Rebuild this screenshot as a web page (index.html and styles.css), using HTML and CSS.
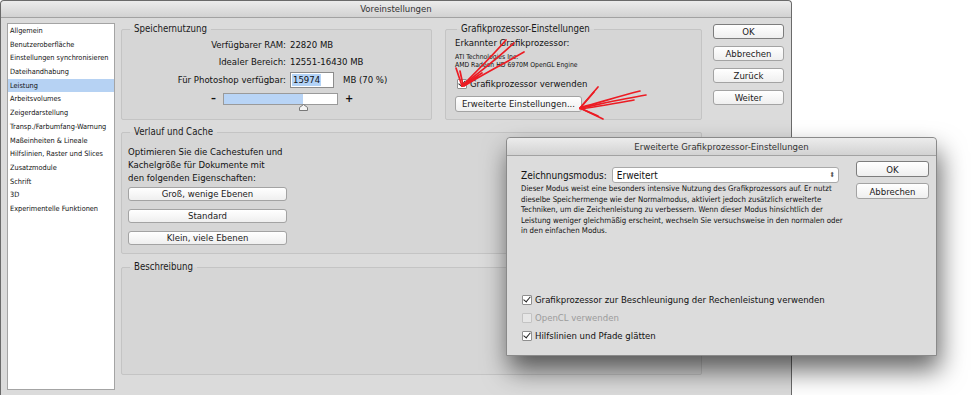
FILE: index.html
```html
<!DOCTYPE html>
<html lang="de">
<head>
    <meta charset="UTF-8">
    <title>Voreinstellungen</title>
    <link rel="stylesheet" href="styles.css">
</head>
<body>

<div class="window">
    <div class="titlebar">Voreinstellungen</div>
    <div class="window-body">
        <ul class="sidebar">
            <li>Allgemein</li>
            <li>Benutzeroberfläche</li>
            <li>Einstellungen synchronisieren</li>
            <li>Dateihandhabung</li>
            <li class="selected">Leistung</li>
            <li>Arbeitsvolumes</li>
            <li>Zeigerdarstellung</li>
            <li>Transp./Farbumfang-Warnung</li>
            <li>Maßeinheiten &amp; Lineale</li>
            <li>Hilfslinien, Raster und Slices</li>
            <li>Zusatzmodule</li>
            <li>Schrift</li>
            <li>3D</li>
            <li>Experimentelle Funktionen</li>
        </ul>

        <div class="panels">
            <div class="panel-row">
                <fieldset class="group memory">
                    <legend>Speichernutzung</legend>
                    <div class="mem-grid">
                        <span class="mem-label">Verfügbarer RAM:</span>
                        <span>22820 MB</span>
                        <span class="mem-label">Idealer Bereich:</span>
                        <span>12551-16430 MB</span>
                        <span class="mem-label">Für Photoshop verfügbar:</span>
                        <span class="mem-value">
                            <span class="field"><span class="field-sel">15974</span></span>
                            <span>MB (70 %)</span>
                        </span>
                    </div>
                    <div class="slider-row">
                        <span class="slider-sign">–</span>
                        <div class="slider">
                            <div class="slider-fill" style="width: 70%"></div>
                            <svg class="slider-thumb" style="left: 70%" width="9" height="7" viewBox="0 0 9 7">
                                <path d="M0.5 6.5 L0.5 3.5 L4.5 0.5 L8.5 3.5 L8.5 6.5 Z" fill="#f4f4f4" stroke="#777" stroke-width="1"/>
                            </svg>
                        </div>
                        <span class="slider-sign">+</span>
                    </div>
                </fieldset>

                <fieldset class="group gpu">
                    <legend>Grafikprozessor-Einstellungen</legend>
                    <div class="gpu-title">Erkannter Grafikprozessor:</div>
                    <div class="gpu-info">ATI Technologies Inc.<br>AMD Radeon HD 6970M OpenGL Engine</div>
                    <label class="check-row gpu-check">
                        <span class="check checked"></span>Grafikprozessor verwenden
                    </label>
                    <button class="btn gpu-btn">Erweiterte Einstellungen...</button>
                </fieldset>
            </div>

            <fieldset class="group cache">
                <legend>Verlauf und Cache</legend>
                <p class="cache-text">Optimieren Sie die Cachestufen und<br>Kachelgröße für Dokumente mit<br>den folgenden Eigenschaften:</p>
                <div class="cache-buttons">
                    <button class="btn">Groß, wenige Ebenen</button>
                    <button class="btn">Standard</button>
                    <button class="btn">Klein, viele Ebenen</button>
                </div>
            </fieldset>

            <fieldset class="group desc">
                <legend>Beschreibung</legend>
            </fieldset>
        </div>

        <div class="buttons">
            <button class="btn default">OK</button>
            <button class="btn">Abbrechen</button>
            <button class="btn">Zurück</button>
            <button class="btn">Weiter</button>
        </div>
    </div>
</div>

<div class="dialog">
    <div class="titlebar dialog-title">Erweiterte Grafikprozessor-Einstellungen</div>
    <div class="dialog-body">
        <div class="dialog-main">
            <div class="mode-row">
                <span class="mode-label">Zeichnungsmodus:</span>
                <div class="select">
                    <span>Erweitert</span>
                    <span class="select-arrows">⬍</span>
                </div>
            </div>
            <p class="mode-text">Dieser Modus weist eine besonders intensive Nutzung des Grafikprozessors auf. Er nutzt<br>dieselbe Speichermenge wie der Normalmodus, aktiviert jedoch zusätzlich erweiterte<br>Techniken, um die Zeichenleistung zu verbessern. Wenn dieser Modus hinsichtlich der<br>Leistung weniger gleichmäßig erscheint, wechseln Sie versuchsweise in den normalen oder<br>in den einfachen Modus.</p>
            <div class="dialog-checks">
                <label class="check-row"><span class="check checked"></span>Grafikprozessor zur Beschleunigung der Rechenleistung verwenden</label>
                <label class="check-row disabled"><span class="check"></span>OpenCL verwenden</label>
                <label class="check-row"><span class="check checked"></span>Hilfslinien und Pfade glätten</label>
            </div>
        </div>
        <div class="dialog-buttons">
            <button class="btn default">OK</button>
            <button class="btn">Abbrechen</button>
        </div>
    </div>
</div>

<!-- hand-drawn red arrows on top of the screenshot -->
<svg class="arrows" width="980" height="395" viewBox="0 0 980 395">
    <g fill="none" stroke="#ec1c24" stroke-width="1.7" stroke-linecap="round">
        <path d="M506 40 C494 54 478 70 462 86"/>
        <path d="M514 43 C498 58 480 72 463 85"/>
        <path d="M524 52 C505 63 482 75 464 86"/>
        <path d="M462 86 L456 68"/>
        <path d="M463 85 L460 71"/>
        <path d="M462 86 L482 73"/>
        <path d="M463 86 L478 77"/>

        <path d="M646 95 C622 99 600 104 580 108"/>
        <path d="M640 91 C616 97 598 103 582 107"/>
        <path d="M634 100 C612 104 596 107 580 109"/>
        <path d="M580 108 L598 87"/>
        <path d="M581 107 L594 92"/>
        <path d="M580 108 L603 119"/>
        <path d="M582 109 L598 116"/>
    </g>
</svg>

</body>
</html>
```

FILE: styles.css
```css
body {
    margin: 0;
    padding: 0;
    background: #fff;
    font-family: "DejaVu Sans Condensed", "DejaVu Sans", sans-serif;
    color: #111;
    font-size: 9px;
    width: 980px;
    height: 395px;
    overflow: hidden;
    position: relative;
}
.window {
    width: 790px;
    height: 400px;
    background: #dbdbdb;
    border: 1px solid #6a6a6a;
    border-bottom: none;
    border-radius: 4px 4px 0 0;
}
.titlebar {
    height: 16px;
    line-height: 16px;
    text-align: center;
    font-size: 9.5px;
    color: #333;
    background: linear-gradient(#ececec, #d2d2d2);
    border-bottom: 1px solid #a2a2a2;
    border-radius: 4px 4px 0 0;
}
.window-body {
    display: flex;
    padding: 5px 6px 0 6px;
}
.sidebar {
    list-style: none;
    margin: 0;
    padding: 0;
    width: 106px;
    height: 365px;
    background: #fff;
    border: 1px solid #a4a4a4;
    font-size: 7.3px;
}
.sidebar li {
    height: 13.7px;
    line-height: 13.7px;
    padding-left: 2px;
    white-space: nowrap;
}
.sidebar li.selected {
    background: #b6d2f3;
}
.panels {
    width: 581px;
    margin-left: 6px;
    display: flex;
    flex-direction: column;
}
.panel-row {
    display: flex;
    gap: 13px;
}
.group {
    margin: 0;
    padding: 0;
    border: 1px solid #c4c4c4;
    border-radius: 2px;
    background: rgba(0, 0, 0, 0.02);
    min-width: 0;
}
.group legend {
    font-size: 9.6px;
    line-height: 12px;
    padding: 0 4px;
    margin-left: 8px;
    color: #1a1a1a;
}
.memory {
    width: 311px;
    box-sizing: border-box;
    padding-bottom: 14px;
}
.gpu {
    flex: 1;
    padding: 0 9px;
}
.gpu legend {
    margin-left: 2px;
}
.mem-grid {
    display: grid;
    grid-template-columns: 164px auto;
    column-gap: 4px;
    grid-template-rows: 17px 17px 19px;
    align-items: center;
    font-size: 9.5px;
    margin-top: 1px;
}
.mem-label {
    text-align: right;
}
.mem-value {
    display: flex;
    align-items: center;
    gap: 9px;
}
.field {
    width: 41px;
    height: 14px;
    background: #fff;
    border: 1px solid #8c8c8c;
    display: flex;
    align-items: center;
    padding-left: 1px;
}
.field-sel {
    background: #b3d3f7;
    padding: 0 1px;
    line-height: 12px;
}
.slider-row {
    display: flex;
    align-items: center;
    gap: 7px;
    margin-top: 3px;
    padding-left: 89px;
    font-size: 11px;
    font-weight: bold;
}
.slider {
    position: relative;
    width: 113px;
    height: 10px;
    background: #fff;
    border: 1px solid #9a9a9a;
}
.slider-fill {
    height: 100%;
    background: #b8d4f6;
}
.slider-thumb {
    position: absolute;
    top: 10px;
    margin-left: -4px;
}
.gpu-title {
    font-size: 9.5px;
    line-height: 14px;
    margin-top: 1px;
}
.gpu-info {
    font-size: 6.8px;
    line-height: 8.5px;
    margin-top: 2.5px;
}
.check-row {
    display: flex;
    align-items: center;
    font-size: 9.5px;
    height: 18px;
}
.gpu-check {
    margin-top: 7px;
    height: 14px;
    margin-left: 2px;
}
.check {
    width: 8px;
    height: 8px;
    margin-right: 3px;
    background: #fff;
    border: 1px solid #8f8f8f;
    border-radius: 1px;
    position: relative;
    flex: none;
}
.check.checked::after {
    content: "";
    position: absolute;
    left: 2px;
    top: -1px;
    width: 3px;
    height: 6px;
    border: solid #222;
    border-width: 0 1.5px 1.5px 0;
    transform: rotate(40deg);
}
.btn {
    font-family: inherit;
    font-size: 9.5px;
    color: #1a1a1a;
    background: linear-gradient(#ffffff, #efefef);
    border: 1px solid #a3a3a3;
    border-radius: 3px;
    padding: 0;
    margin: 0;
    height: 15px;
    line-height: 13px;
}
.btn.default {
    border-color: #7d7d7d;
}
.gpu-btn {
    margin-top: 5px;
    width: 127px;
    height: 16px;
}
.cache {
    margin-top: 6px;
    padding: 0 6px 8px 6px;
}
.cache legend {
    margin-left: 2px;
}
.cache-text {
    margin: 7px 0 0 0;
    font-size: 9.5px;
    line-height: 13px;
}
.cache-buttons {
    display: flex;
    flex-direction: column;
    gap: 8px;
    margin-top: 3px;
}
.cache-buttons .btn {
    width: 159px;
    height: 14px;
    line-height: 12px;
}
.desc {
    margin-top: 7px;
    height: 112px;
}
.buttons {
    width: 71px;
    margin-left: 11px;
    padding-top: 1px;
    display: flex;
    flex-direction: column;
    gap: 7px;
}
.dialog {
    position: absolute;
    left: 506px;
    top: 137px;
    width: 429px;
    height: 217px;
    background: #dcdcdc;
    border: 1px solid #8a8a8a;
    border-radius: 4px 4px 0 0;
    box-shadow: 3px 14px 26px rgba(0, 0, 0, 0.6);
}
.dialog-title {
    height: 17px;
    line-height: 17px;
}
.dialog-body {
    display: flex;
    padding: 0 7px 0 14px;
}
.dialog-main {
    flex: 1;
    min-width: 0;
}
.mode-row {
    display: flex;
    align-items: center;
    gap: 5px;
    margin-top: 11px;
}
.mode-label {
    font-size: 10px;
}
.select {
    width: 218px;
    height: 14px;
    background: #fff;
    border: 1px solid #a9a9a9;
    border-radius: 3px;
    display: flex;
    align-items: center;
    justify-content: space-between;
    padding: 0 3px 0 4px;
    font-size: 10px;
}
.select-arrows {
    font-size: 7px;
    color: #555;
}
.mode-text {
    margin: 1px 0 0 0;
    font-size: 7.8px;
    line-height: 10.5px;
    white-space: nowrap;
}
.dialog-checks {
    margin-top: 54px;
}
.dialog-checks .check-row {
    padding-left: 1px;
}
.check-row.disabled {
    color: #9b9b9b;
}
.check-row.disabled .check {
    border-color: #c3c3c3;
    background: #e6e6e6;
}
.dialog-buttons {
    width: 73px;
    flex: none;
    display: flex;
    flex-direction: column;
    gap: 6px;
    padding-top: 5px;
}
.dialog-buttons .btn {
    height: 16px;
}
.arrows {
    position: absolute;
    left: 0;
    top: 0;
    pointer-events: none;
}
```
